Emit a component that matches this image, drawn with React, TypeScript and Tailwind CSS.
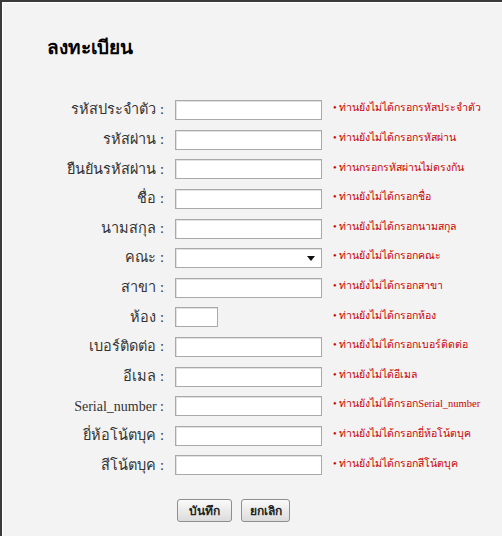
interface Field {
    label: string;
    error: string;
    kind?: 'text' | 'select' | 'short';
    small?: boolean;
}

const fields: Field[] = [
    { label: 'รหัสประจำตัว', error: 'ท่านยังไม่ได้กรอกรหัสประจำตัว' },
    { label: 'รหัสผ่าน', error: 'ท่านยังไม่ได้กรอกรหัสผ่าน' },
    { label: 'ยืนยันรหัสผ่าน', error: 'ท่านกรอกรหัสผ่านไม่ตรงกัน' },
    { label: 'ชื่อ', error: 'ท่านยังไม่ได้กรอกชื่อ' },
    { label: 'นามสกุล', error: 'ท่านยังไม่ได้กรอกนามสกุล' },
    { label: 'คณะ', error: 'ท่านยังไม่ได้กรอกคณะ', kind: 'select' },
    { label: 'สาขา', error: 'ท่านยังไม่ได้กรอกสาขา' },
    { label: 'ห้อง', error: 'ท่านยังไม่ได้กรอกห้อง', kind: 'short' },
    { label: 'เบอร์ติดต่อ', error: 'ท่านยังไม่ได้กรอกเบอร์ติดต่อ' },
    { label: 'อีเมล', error: 'ท่านยังไม่ได้อีเมล' },
    { label: 'Serial_number', error: 'ท่านยังไม่ได้กรอกSerial_number', small: true },
    { label: 'ยี่ห้อโน้ตบุค', error: 'ท่านยังไม่ได้กรอกยี่ห้อโน้ตบุค' },
    { label: 'สีโน้ตบุค', error: 'ท่านยังไม่ได้กรอกสีโน้ตบุค' },
];

const inputCls =
    'h-[20px] border border-[#a9a9a9] bg-white shadow-[inset_1px_1px_0_#e2e2e2] outline-none';

function Row({ field }: { field: Field }) {
    return (
        <div className="flex h-[29.6px] items-center">
            <div
                className={`w-[161px] shrink-0 text-right text-[#333] ${
                    field.small ? "font-['Liberation_Serif',serif] text-[14px]" : 'text-[14.5px]'
                }`}
            >
                {field.label} :
            </div>
            <div className="ml-[11px] w-[147px] shrink-0">
                {field.kind === 'select' ? (
                    <div className={`${inputCls} relative w-[147px]`}>
                        <svg className="absolute right-[6px] top-[7px]" width="8" height="5" viewBox="0 0 8 5">
                            <path d="M0 0h8L4 5z" fill="#111" />
                        </svg>
                    </div>
                ) : (
                    <input type="text" className={`${inputCls} ${field.kind === 'short' ? 'w-[43px]' : 'w-[147px]'}`} />
                )}
            </div>
            <div className="ml-[11px] -mt-[4px] whitespace-nowrap text-[10.5px] text-[#cc0000]">• {field.error}</div>
        </div>
    );
}

export default function App() {
    return (
        <div className="h-[536px] w-full overflow-hidden border-l-2 border-t-2 border-[#3a3a3a] bg-[#f3f3f3] font-['Liberation_Serif',serif]">
            <div className="h-full border-l border-t border-white">
                <h1 className="pl-[44px] pt-[31px] text-[19px] font-bold text-black">ลงทะเบียน</h1>
                <div className="mt-[33px]">
                    {fields.map((f) => (
                        <Row key={f.label} field={f} />
                    ))}
                </div>
                <div className="mt-[19px] flex gap-[9px] pl-[174px]">
                    <button className="h-[23px] w-[55px] rounded-[3px] border border-[#8e8e8e] bg-gradient-to-b from-[#fafafa] to-[#dcdcdc] text-[12px] font-bold text-[#222]">
                        บันทึก
                    </button>
                    <button className="h-[23px] w-[49px] rounded-[3px] border border-[#8e8e8e] bg-gradient-to-b from-[#fafafa] to-[#dcdcdc] text-[12px] font-bold text-[#222]">
                        ยกเลิก
                    </button>
                </div>
            </div>
        </div>
    );
}
